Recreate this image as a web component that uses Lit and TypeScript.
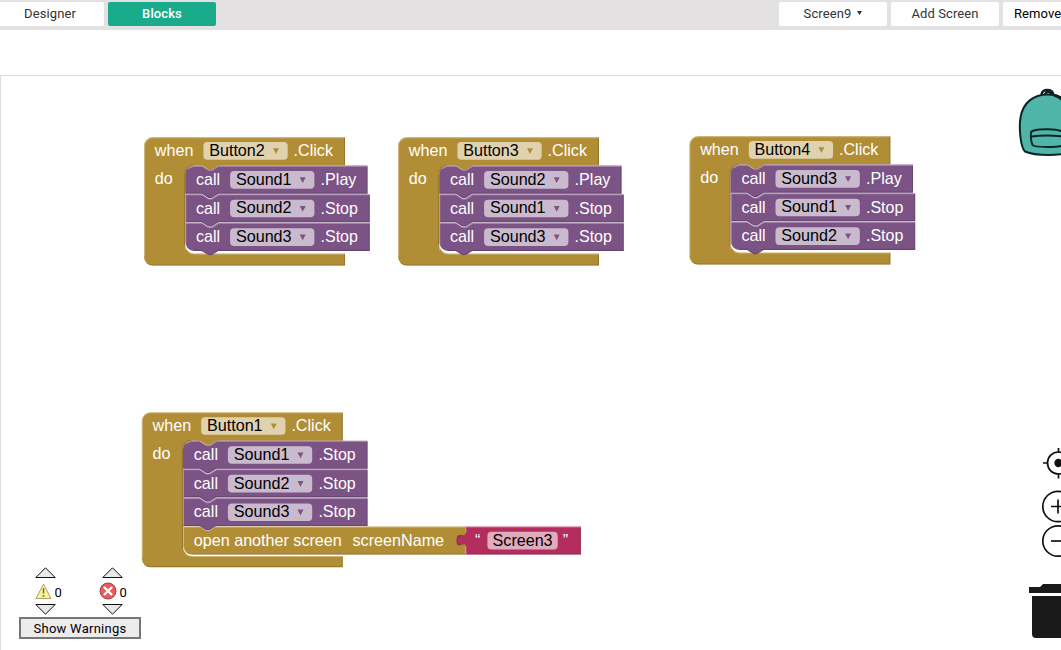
import { LitElement, html, svg, css } from "lit";
import { customElement, property } from "lit/decorators.js";

const OLIVE = "#b18e35";
const PURPLE = "#7c5385";
const PINK = "#b32d5e";

interface Call { field: string; method: string; }
interface Handler { x: number; y: number; button: string; calls: Call[]; opens?: string; }

const c = (field: string, method: string): Call => ({ field, method });

const HANDLERS: Handler[] = [
  { x: 144, y: 137.1, button: "Button2", calls: [c("Sound1", "Play"), c("Sound2", "Stop"), c("Sound3", "Stop")] },
  { x: 398, y: 137.1, button: "Button3", calls: [c("Sound2", "Play"), c("Sound1", "Stop"), c("Sound3", "Stop")] },
  { x: 689.4, y: 136.1, button: "Button4", calls: [c("Sound3", "Play"), c("Sound1", "Stop"), c("Sound2", "Stop")] },
  { x: 141.8, y: 412.2, button: "Button1", calls: [c("Sound1", "Stop"), c("Sound2", "Stop"), c("Sound3", "Stop")], opens: "Screen3" },
];

const ROW = 28.6;
const INNER = 41.2;

@customElement("block-canvas")
export class BlockCanvas extends LitElement {
  @property({ attribute: false }) handlers: Handler[] = [];

  static styles = css`
    :host { display: block; }
    svg { display: block; }
    text { font-family: "Liberation Sans", Arial, sans-serif; font-size: 16.1px; fill: #fff; }
    .field { fill: #000; }
    .pill { fill: #fff; fill-opacity: 0.6; }
    .light { fill: none; stroke: #fff; stroke-opacity: 0.36; stroke-width: 1.1; }
    .dark { fill: none; stroke: #000; stroke-opacity: 0.16; stroke-width: 1.1; }
  `;

  private label(x: number, y: number, w: number, text: string, cls = "") {
    return svg`<text class=${cls} x=${x} y=${y} textLength=${w} lengthAdjust="spacingAndGlyphs">${text}</text>`;
  }

  private dropdown(x: number, y: number, text: string, tw: number, color: string) {
    return svg`
      <rect class="pill" x=${x} y=${y} width="84.3" height="17.6" rx="4"></rect>
      ${this.label(x + 5.8, y + 13.8, tw, text, "field")}
      <path d="M${x + 69.6} ${y + 6.2}h6l-3 5.8z" fill=${color}></path>`;
  }

  private call(k: Call, i: number, last: boolean) {
    const w = k.method === "Play" ? 182.4 : 184.6;
    const start = i === 0 ? "M0 8.8a8.8 8.8 0 0 1 8.8 -8.8" : "M0 0";
    const end = last ? "H8.8a8.8 8.8 0 0 1 -8.8 -8.8" : "H0";
    const top = `${start}H16.5l6.6 4.2h3.3l6.6 -4.2H${w}`;
    return svg`<g transform="translate(${INNER} ${28.5 + i * ROW})">
      ${i === 0 ? svg`<path d="M15 -.6H35V0H33l-6.6 4.4h-3.3L16.5 0H15z" fill=${OLIVE}></path>` : null}
      <path d="${top}V${ROW - 0.5}H33l-6.6 4.2h-3.3l-6.6 -4.2${end}z" fill=${PURPLE}></path>
      <path class="dark" d="M${w - 0.5} 1V27.6H33l-6.6 4.2h-3.3l-6.6 -4.2H${last ? 8.8 : 1}"></path>
      <path class="light" transform="translate(0.5 0.5)" d="${i === 0 ? "M2.5 2.8a8.8 8.8 0 0 1 6.3 -2.8" : "M0 27V0"}H16.5l6.6 4.2h3.3l6.6 -4.2H${w - 0.5}"></path>
      ${this.label(10.8, 19.5, 24.2, "call")}
      ${this.dropdown(44.9, 5.5, k.field, 55.7, PURPLE)}
      ${this.label(135.4, 19.5, k.method === "Play" ? 35.8 : 37.3, "." + k.method)}
    </g>`;
  }

  private open(name: string, i: number) {
    const w = 282.4;
    return svg`<g transform="translate(${INNER} ${28.5 + i * ROW})">
      <path d="M0 0H16.5l6.6 4.2h3.3l6.6 -4.2H${w}V28.1H8.8A8.8 8.8 0 0 1 0 19.3z" fill=${OLIVE}></path>
      <path class="light" d="M.5 19V.5H16.5M33 .5H${w - 0.5}M3 25.7a8.8 8.8 0 0 1 -2.5 -6.4"></path>
      <path class="dark" d="M8.8 27.6H${w}"></path>
      ${this.label(10.8, 19.3, 148, "open another screen")}
      ${this.label(169.5, 19.3, 91.6, "screenName")}
      <g transform="translate(${w} 0)">
        <path d="M0 0H115.5V28.1H0V20c0 -8 -8.8 5.5 -8.8 -6s8.8 -.2 8.8 -8.2z" fill=${PINK}></path>
        <path class="dark" d="M115 1V27.6H0M-1 18.600c-3 -1.400 -7.400 2 -7.400 -4.600s5 -4 7 -5"></path>
        <path class="light" d="M.5 28V20M.5 6V.5H115"></path>
        <text x="9.7" y="19.3">“</text>
        <rect class="pill" x="22" y="5.3" width="70.3" height="17.6" rx="4"></rect>
        ${this.label(27.2, 19.1, 60, name, "field")}
        <text x="97.4" y="19.3">”</text>
      </g>
    </g>`;
  }

  private handler(h: Handler) {
    const n = h.calls.length + (h.opens ? 1 : 0);
    const inner = 28.5 + n * ROW + (h.opens ? 0.8 : 2);
    const bottom = h.opens ? 28.5 + n * ROW + 12.2 : 128.5;
    return svg`<g transform="translate(${h.x} ${h.y})">
      <path fill=${OLIVE} d="M8.8 0H201V28.5H${INNER + 8.8}a8.8 8.8 0 0 0 -8.8 8.8V${inner - 8.8}a8.8 8.8 0 0 0 8.8 8.8H201V${bottom}H8.8A8.8 8.8 0 0 1 0 ${bottom - 8.8}V8.8A8.8 8.8 0 0 1 8.8 0z"></path>
      <path class="light" d="M.5 ${bottom - 9}V8.8A8.3 8.3 0 0 1 8.8 .5H200.5M${INNER + 2.5} ${inner - 2}a8.8 8.8 0 0 0 6.3 2.5H200.5"></path>
      <path class="dark" d="M200.5 1V28M${INNER - 0.5} ${inner - 8}V37a8.8 8.8 0 0 1 8.8 -8.8M200.5 ${inner + 1}V${bottom - 0.5}H8.8A8.3 8.3 0 0 1 2.5 ${bottom - 3}"></path>
      ${this.label(10.8, 18.8, 38.6, "when")}
      ${this.dropdown(59.4, 5, h.button, 55.6, OLIVE)}
      ${this.label(149.6, 18.8, 39.4, ".Click")}
      ${this.label(10.8, 46.9, 18, "do")}
      ${h.opens ? this.open(h.opens, h.calls.length) : null}
      ${[...h.calls].map((k, i) => this.call(k, i, !h.opens && i === h.calls.length - 1))}
    </g>`;
  }

  render() {
    return html`<svg width="1000" height="574" viewBox="1 76 1000 574">${this.handlers.map((h) => this.handler(h))}</svg>`;
  }
}

@customElement("app-root")
export class AppRoot extends LitElement {
  static styles = css`
    :host {
      display: flex; flex-direction: column; width: 100%; height: 650px; overflow: hidden;
      background: #fff; font-family: Roboto, sans-serif; font-size: 13px; color: #333;
    }
    .bar {
      display: flex; flex: none; justify-content: space-between; box-sizing: border-box;
      height: 30px; padding: 2px 0 4px; margin: 0 -50px 0 -4px; background: #e3e1e2;
    }
    .tabs { display: flex; gap: 4px; }
    .tab {
      display: flex; align-items: center; justify-content: center; gap: 6px; box-sizing: border-box;
      width: 108px; height: 24px; padding-bottom: 2px; border-radius: 2px; background: #fff; letter-spacing: 0.1px; white-space: nowrap;
    }
    .active { background: #1aaa8c; color: #fff; font-weight: 500; }
    .remove { color: #000; justify-content: flex-start; padding-left: 11px; }
    .caret { width: 5px; height: 4px; }
    .spacer { flex: none; height: 45px; }
    .work { position: relative; flex: 1; border-top: 1px solid #dcdcdc; border-left: 1px solid #dcdcdc; overflow: hidden; }
    .tools { position: absolute; left: 1009px; top: 4px; }
    .warn { position: absolute; left: 18px; top: 491px; width: 122px; }
    .counts { display: grid; grid-template-columns: 67px 55px; height: 50px; }
    .count { display: flex; flex-direction: column; align-items: flex-start; padding-left: 15.500px; }
    .row { display: flex; align-items: center; gap: 3px; height: 26px; color: #000; }
    .num { padding-top: 3px; }
    .error { margin-left: -3px; }
    .count svg, .tab svg { display: block; }
    .show {
      display: flex; align-items: center; justify-content: center; box-sizing: border-box; width: 122px; height: 22px;
      border: 2px solid #777; background: #ececee; color: #000; letter-spacing: 0.25px; white-space: nowrap;
    }
  `;

  private triangle(up: boolean) {
    return html`<svg width="21" height="11" viewBox="0 0 21 11">
      <path d=${up ? "M.8 10.5L10.5 .8L20.2 10.5z" : "M.8 .5L10.5 10.2L20.2 .5z"} fill="#e9e9e9" stroke="#111" stroke-width="1"></path></svg>`;
  }

  render() {
    return html`
      <div class="bar">
        <div class="tabs"><div class="tab">Designer</div><div class="tab active">Blocks</div></div>
        <div class="tabs">
          <div class="tab">Screen9 <svg class="caret" viewBox="0 0 5 4"><path d="M0 0h5L2.5 4z" fill="#333"></path></svg></div>
          <div class="tab">Add Screen</div>
          <div class="tab remove">Remove</div>
        </div>
      </div>
      <div class="spacer"></div>
      <div class="work">
        <block-canvas .handlers=${HANDLERS}></block-canvas>
        <svg class="tools" width="51" height="570" viewBox="1010 80 51 570" fill="none" stroke="#111">
          <g stroke="#0c2524" stroke-width="2" stroke-linecap="round" stroke-linejoin="round">
            <path stroke-width="2.4" d="M1041.5 94.5c1-6 10.5-6 12 0M1045 94c1-2.5 5-2.5 6 0"></path>
            <path fill="#4fb5aa" d="M1025 151.5c-5-5-6-25-4.500-34c2.500-15 13-23 27-23c16 0 24 8 27 23c1.500 9 0 29-4 35c-10 3-34 4-45.500-1z"></path>
            <path d="M1031 133.500c-.5 4 .3 8.500 1.500 11.500c2 2.500 27 2.500 31 0v-11.500c-1-5.500-29-5.500-32.500-1.500zM1031.500 136.500c8-1.200 22-1.200 32 0"></path>
            <path stroke-width="3" d="M1055 95.500q4 1 7 4"></path>
          </g>
          <g stroke-width="1.7">
            <circle cx="1058.5" cy="463" r="11"></circle><circle cx="1058.5" cy="463" r="3.3" fill="#111"></circle>
            <path d="M1043 463h5M1058.5 448v4.5M1058.5 473.5v5"></path>
            <circle cx="1058" cy="506.5" r="15.2"></circle><path d="M1051 506.5h14M1058 499.5v14"></path>
            <circle cx="1058" cy="541" r="15.2"></circle><path d="M1051 541h14"></path>
          </g>
          <path stroke="none" fill="#1a1a1a" d="M1029 587h11l3-3h18v9h-32zM1032 596h29v42h-25q-4 0-4-4z"></path>
        </svg>
        <div class="warn">
          <div class="counts">
            <div class="count">${this.triangle(true)}
              <div class="row">
                <svg width="17" height="17" viewBox="0 0 17 17"><path d="M8.5 1L16 15.5H1z" fill="#f8f48f" stroke="#a9a578" stroke-linejoin="round"></path><path d="M8.5 5v5.5M8.5 12v1.8" stroke="#77764e" stroke-width="1.6"></path></svg>
                <span class="num">0</span></div>
              ${this.triangle(false)}</div>
            <div class="count">${this.triangle(true)}
              <div class="row">
                <svg class="error" width="18" height="18" viewBox="0 0 18 18"><circle cx="9" cy="9" r="8" fill="#ee5a5c" stroke="#934a4a"></circle><path d="M5 5l8 8M13 5l-8 8" stroke="#fff" stroke-width="2.4"></path></svg>
                <span class="num">0</span></div>
              ${this.triangle(false)}</div>
          </div>
          <div class="show">Show Warnings</div>
        </div>
      </div>`;
  }
}
